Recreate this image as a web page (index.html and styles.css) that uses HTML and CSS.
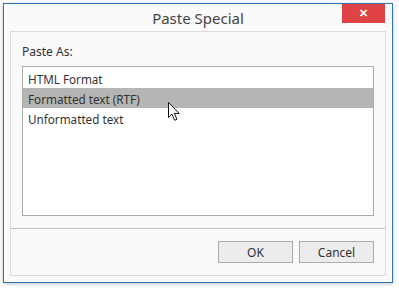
FILE: index.html
```html
<!DOCTYPE html>
<html lang="en">
<head>
    <meta charset="utf-8">
    <title>Paste Special</title>
    <link rel="stylesheet" href="styles.css">
</head>
<body>
    <div class="window">
        <div class="titlebar">
            <span class="title">Paste Special</span>
            <button class="close-btn">&#x2715;</button>
        </div>
        <div class="panel">
            <div class="content">
                <div class="label">Paste As:</div>
                <div class="listbox">
                    <div class="item">HTML Format</div>
                    <div class="item selected">Formatted text (RTF)
                        <svg class="cursor" width="13" height="20" viewBox="0 0 13 20">
                            <path d="M0.5 0.5 L0.5 15.5 L4 12.2 L6.6 18.3 L8.9 17.3 L6.4 11.4 L11.2 11.4 Z" fill="#fff" stroke="#111" stroke-width="1"/>
                        </svg>
                    </div>
                    <div class="item">Unformatted text</div>
                </div>
            </div>
            <div class="footer">
                <button class="btn">OK</button>
                <button class="btn">Cancel</button>
            </div>
        </div>
    </div>
</body>
</html>
```

FILE: styles.css
```css
body {
    margin: 0;
    background: #ffffff;
    font-family: "Noto Sans", "Open Sans", sans-serif;
}
.window {
    margin: 3px;
    width: 388px;
    height: 278px;
    border: 1px solid #2f72b6;
    background: #fafafa;
    box-shadow: 0 1px 4px rgba(0, 0, 0, 0.25);
    display: flex;
    flex-direction: column;
}
.titlebar {
    height: 27px;
    position: relative;
    display: flex;
    justify-content: center;
    align-items: center;
}
.title {
    font-size: 15px;
    color: #444;
}
.close-btn {
    position: absolute;
    top: 0;
    right: 7px;
    width: 43px;
    height: 19px;
    border: none;
    background: #e04345;
    color: #fff;
    font-size: 11px;
    font-weight: bold;
    padding: 0;
}
.panel {
    margin: 0 6px 6px 6px;
    flex: 1;
    border: 1px solid #dcdcdc;
    background: #f9f9f9;
    display: flex;
    flex-direction: column;
}
.content {
    padding: 11px 11px 12px 11px;
    border-bottom: 1px solid #c4c4c4;
}
.label {
    font-size: 12px;
    color: #333;
    height: 23px;
}
.listbox {
    height: 147px;
    border: 1px solid #ababab;
    background: #fff;
    padding-top: 1px;
}
.item {
    height: 20px;
    line-height: 22px;
    padding-left: 5px;
    font-size: 11.7px;
    color: #333;
    position: relative;
}
.item.selected {
    background: #b5b5b5;
}
.cursor {
    position: absolute;
    left: 145px;
    top: 14px;
}
.footer {
    flex: 1;
    display: flex;
    justify-content: flex-end;
    align-items: flex-start;
    gap: 6px;
    padding: 12px 11px 0 0;
}
.btn {
    width: 75px;
    height: 22px;
    border: 1px solid #acacac;
    background: #ececec;
    font-family: inherit;
    font-size: 12px;
    color: #333;
    padding: 0;
}
```
